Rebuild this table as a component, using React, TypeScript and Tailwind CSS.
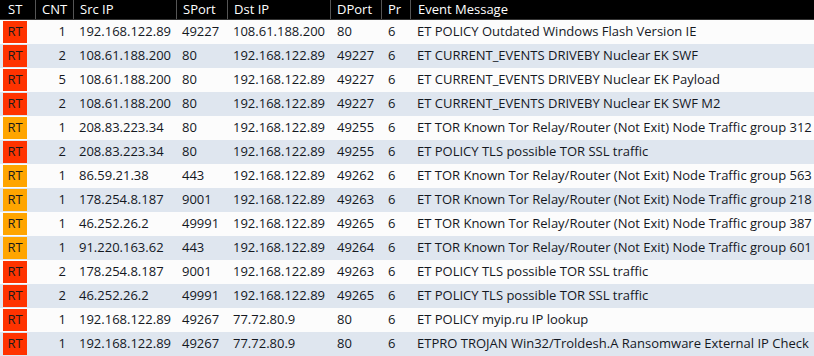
const rows = [
  { st: "red", cnt: 1, src: "192.168.122.89", sport: "49227", dst: "108.61.188.200", dport: "80", pr: "6", msg: "ET POLICY Outdated Windows Flash Version IE" },
  { st: "red", cnt: 2, src: "108.61.188.200", sport: "80", dst: "192.168.122.89", dport: "49227", pr: "6", msg: "ET CURRENT_EVENTS DRIVEBY Nuclear EK SWF" },
  { st: "red", cnt: 5, src: "108.61.188.200", sport: "80", dst: "192.168.122.89", dport: "49227", pr: "6", msg: "ET CURRENT_EVENTS DRIVEBY Nuclear EK Payload" },
  { st: "red", cnt: 2, src: "108.61.188.200", sport: "80", dst: "192.168.122.89", dport: "49227", pr: "6", msg: "ET CURRENT_EVENTS DRIVEBY Nuclear EK SWF M2" },
  { st: "orange", cnt: 1, src: "208.83.223.34", sport: "80", dst: "192.168.122.89", dport: "49255", pr: "6", msg: "ET TOR Known Tor Relay/Router (Not Exit) Node Traffic group 312" },
  { st: "red", cnt: 2, src: "208.83.223.34", sport: "80", dst: "192.168.122.89", dport: "49255", pr: "6", msg: "ET POLICY TLS possible TOR SSL traffic" },
  { st: "orange", cnt: 1, src: "86.59.21.38", sport: "443", dst: "192.168.122.89", dport: "49262", pr: "6", msg: "ET TOR Known Tor Relay/Router (Not Exit) Node Traffic group 563" },
  { st: "orange", cnt: 1, src: "178.254.8.187", sport: "9001", dst: "192.168.122.89", dport: "49263", pr: "6", msg: "ET TOR Known Tor Relay/Router (Not Exit) Node Traffic group 218" },
  { st: "orange", cnt: 1, src: "46.252.26.2", sport: "49991", dst: "192.168.122.89", dport: "49265", pr: "6", msg: "ET TOR Known Tor Relay/Router (Not Exit) Node Traffic group 387" },
  { st: "orange", cnt: 1, src: "91.220.163.62", sport: "443", dst: "192.168.122.89", dport: "49264", pr: "6", msg: "ET TOR Known Tor Relay/Router (Not Exit) Node Traffic group 601" },
  { st: "red", cnt: 2, src: "178.254.8.187", sport: "9001", dst: "192.168.122.89", dport: "49263", pr: "6", msg: "ET POLICY TLS possible TOR SSL traffic" },
  { st: "red", cnt: 2, src: "46.252.26.2", sport: "49991", dst: "192.168.122.89", dport: "49265", pr: "6", msg: "ET POLICY TLS possible TOR SSL traffic" },
  { st: "red", cnt: 1, src: "192.168.122.89", sport: "49267", dst: "77.72.80.9", dport: "80", pr: "6", msg: "ET POLICY myip.ru IP lookup" },
  { st: "red", cnt: 1, src: "192.168.122.89", sport: "49267", dst: "77.72.80.9", dport: "80", pr: "6", msg: "ETPRO TROJAN Win32/Troldesh.A Ransomware External IP Check" },
];

const headers = ["ST", "CNT", "Src IP", "SPort", "Dst IP", "DPort", "Pr", "Event Message"];

const cols = "grid grid-cols-[35px_38px_103px_51px_103px_51px_29px_1fr]";

export default function App() {
  return (
    <div className="w-[814px] h-[356px] overflow-hidden bg-white text-[13px] font-['Open_Sans',sans-serif]">
      <div className={`${cols} h-[20px] bg-black text-white leading-[19px] border-b border-[#333]`}>
        {headers.map((h, i) => (
          <div
            key={h}
            className={`${i === 0 ? "pl-[8px]" : "pl-[6px] border-l border-[#555]"} ${i === 7 ? "pl-[7px]" : ""} whitespace-nowrap`}
          >
            {h}
          </div>
        ))}
      </div>
      {rows.map((r, i) => (
        <div
          key={i}
          className={`${cols} h-[24px] items-center text-[#14181f] whitespace-nowrap ${
            i % 2 === 0 ? "bg-[#fcfcfc]" : "bg-[#dfe6ef]"
          }`}
        >
          <div className="pl-[3px]">
            <div
              className={`w-[24px] h-[22px] flex items-center justify-center text-[#1a1a1a] ${
                r.st === "red" ? "bg-[#ff3300]" : "bg-[#ffa500]"
              }`}
            >
              RT
            </div>
          </div>
          <div className="text-right pr-[7px]">{r.cnt}</div>
          <div className="pl-[6px]">{r.src}</div>
          <div className="pl-[6px]">{r.sport}</div>
          <div className="pl-[6px]">{r.dst}</div>
          <div className="pl-[7px]">{r.dport}</div>
          <div className="pl-[7px]">{r.pr}</div>
          <div className="pl-[7px]">{r.msg}</div>
        </div>
      ))}
    </div>
  );
}
